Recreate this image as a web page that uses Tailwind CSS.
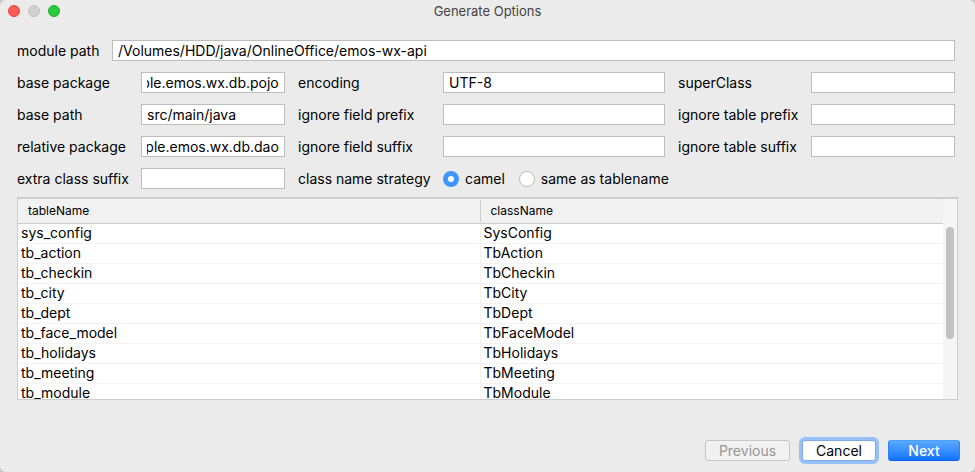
<!DOCTYPE html>
<html lang="en">
<head>
<meta charset="utf-8">
<title>Generate Options</title>
<script src="https://cdn.jsdelivr.net/npm/@tailwindcss/browser@4"></script>
</head>
<body class="bg-[#c9c9c9]">
<div class="flex h-screen flex-col overflow-hidden rounded-md bg-[#ebebeb] font-[Inter,sans-serif] text-sm leading-4 text-black">
  <header class="grid h-[22px] shrink-0 grid-cols-[1fr_auto_1fr] items-center px-2">
    <div class="flex gap-2">
      <button aria-label="Close" class="size-3 rounded-full border border-[#e2463f] bg-[#fc5b57]"></button>
      <button aria-label="Minimize" disabled class="size-3 rounded-full border border-[#c0c0c0] bg-[#d0d0d0]"></button>
      <button aria-label="Zoom" class="size-3 rounded-full border border-[#1dad2b] bg-[#29c940]"></button>
    </div>
    <h1 class="text-[13px] text-[#444]">Generate Options</h1>
  </header>

  <form class="flex min-h-0 flex-1 flex-col pt-[18px] pb-[11px]">
    <div class="flex flex-col gap-[11px] pr-5 pl-[17px]">
      <div class="flex items-center">
        <label for="module" class="w-[95px] leading-[15px]">module path</label>
        <input id="module" value="/Volumes/HDD/java/OnlineOffice/emos-wx-api" class="h-[21px] min-w-0 flex-1 border border-[#bdbdbd] bg-white px-[5px] pb-px outline-none">
      </div>
      <div class="grid grid-cols-[124px_144px_158px_1fr_146px_144px] items-center gap-y-[11px] leading-[15px] whitespace-nowrap">
        <label for="pkg">base package</label>
        <input id="pkg" data-end value="com.example.emos.wx.db.pojo" class="h-[21px] w-full border border-[#bdbdbd] bg-white px-[5px] pb-px outline-none">
        <label for="enc" class="pl-[13px]">encoding</label>
        <input id="enc" value="UTF-8" class="h-[21px] w-full border border-[#bdbdbd] bg-white px-[5px] pb-px outline-none">
        <label for="super" class="pl-[13px]">superClass</label>
        <input id="super" class="h-[21px] w-full border border-[#bdbdbd] bg-white px-[5px] pb-px outline-none">

        <label for="path">base path</label>
        <input id="path" value="src/main/java" class="h-[21px] w-full border border-[#bdbdbd] bg-white px-[5px] pb-px outline-none">
        <label for="fprefix" class="pl-[13px]">ignore field prefix</label>
        <input id="fprefix" class="h-[21px] w-full border border-[#bdbdbd] bg-white px-[5px] pb-px outline-none">
        <label for="tprefix" class="pl-[13px]">ignore table prefix</label>
        <input id="tprefix" class="h-[21px] w-full border border-[#bdbdbd] bg-white px-[5px] pb-px outline-none">

        <label for="rel">relative package</label>
        <input id="rel" data-end value="com.example.emos.wx.db.dao" class="h-[21px] w-full border border-[#bdbdbd] bg-white px-[5px] pb-px outline-none">
        <label for="fsuffix" class="pl-[13px]">ignore field suffix</label>
        <input id="fsuffix" class="h-[21px] w-full border border-[#bdbdbd] bg-white px-[5px] pb-px outline-none">
        <label for="tsuffix" class="pl-[13px]">ignore table suffix</label>
        <input id="tsuffix" class="h-[21px] w-full border border-[#bdbdbd] bg-white px-[5px] pb-px outline-none">

        <label for="extra">extra class suffix</label>
        <input id="extra" class="h-[21px] w-full border border-[#bdbdbd] bg-white px-[5px] pb-px outline-none">
        <span id="strategy" class="pl-[13px]">class name strategy</span>
        <div role="radiogroup" aria-labelledby="strategy" class="col-span-3 flex h-[21px] items-center gap-[14px]">
          <label class="flex items-center gap-[6px]"><input type="radio" name="strategy" checked class="size-4 appearance-none rounded-full border border-[#bdbdbd] bg-white checked:border-[5px] checked:border-[#3e96fd]">camel</label>
          <label class="flex items-center gap-[6px]"><input type="radio" name="strategy" class="size-4 appearance-none rounded-full border border-[#bdbdbd] bg-white checked:border-[5px] checked:border-[#3e96fd]">same as tablename</label>
        </div>
      </div>
    </div>

    <div class="mx-[17px] mt-2 flex min-h-0 flex-1 border border-t-2 border-[#cdcdcd] bg-white">
      <div class="min-w-0 flex-1 overflow-hidden">
        <table class="w-full table-fixed border-separate border-spacing-0 text-left">
          <thead class="bg-[#f1f1f1] text-xs">
            <tr class="h-[25px]">
              <th class="border-b border-[#cdcdcd] p-0 font-normal"><div class="border-r border-[#cdcdcd] py-[3px] pl-[10px]">tableName</div></th>
              <th class="border-b border-[#cdcdcd] p-0 pl-[10px] font-normal">className</th>
            </tr>
          </thead>
          <tbody id="rows" class="leading-[17px]"></tbody>
        </table>
      </div>
      <div class="w-[14px] bg-[#f5f5f5] px-[3px] pt-7"><div class="h-28 rounded-full bg-[#c2c2c2]"></div></div>
    </div>

    <footer class="mt-10 flex justify-end gap-3 pr-[15px]">
      <button type="button" disabled class="h-[21px] w-[85px] rounded-[3px] border border-[#c6c6c6] bg-[#f1f1f1] text-[#969696]">Previous</button>
      <button type="button" class="h-[21px] w-[74px] rounded-[3px] border border-[#7fa9e0] bg-white ring-3 ring-[#97c1fa]">Cancel</button>
      <button type="submit" class="h-[21px] w-[72px] rounded-[3px] border border-x-[#2a80f8] border-t-[#4ba0fb] border-b-[#0a5df2] bg-linear-to-b from-[#5aa9fc] to-[#0f73fd] font-medium text-white">Next</button>
    </footer>
  </form>
</div>
<script>
  const tables = [
    ['sys_config', 'SysConfig'], ['tb_action', 'TbAction'], ['tb_checkin', 'TbCheckin'],
    ['tb_city', 'TbCity'], ['tb_dept', 'TbDept'], ['tb_face_model', 'TbFaceModel'],
    ['tb_holidays', 'TbHolidays'], ['tb_meeting', 'TbMeeting'], ['tb_module', 'TbModule']
  ];
  document.getElementById('rows').innerHTML = tables.map(([t, c]) =>
    `<tr class="h-5 align-top"><td class="border-r border-b border-[#f3f3f3] p-0 pl-[3px]">${t}</td><td class="border-b border-[#f3f3f3] p-0 pl-[3px]">${c}</td></tr>`).join('');
  // Long package names show their last segment.
  const showEnds = () => document.querySelectorAll('[data-end]').forEach(el => { el.scrollLeft = 9999; });
  showEnds();
  window.addEventListener('load', () => { showEnds(); requestAnimationFrame(showEnds); });
</script>
</body>
</html>
